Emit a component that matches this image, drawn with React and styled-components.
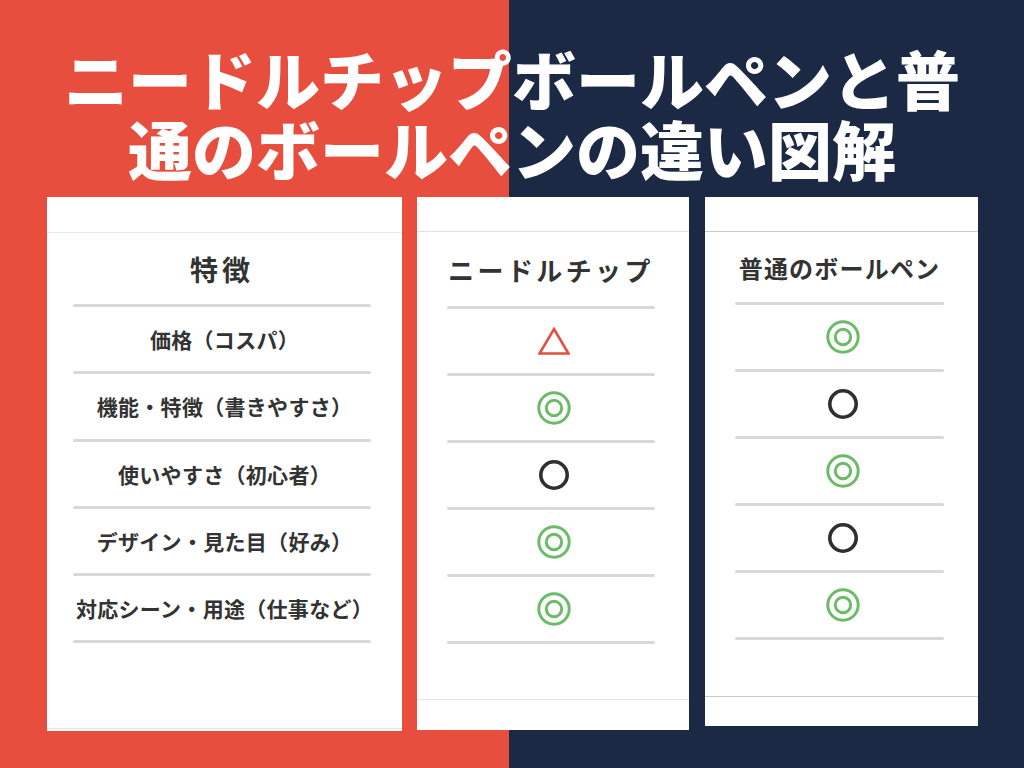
import React from "react";
import styled, { createGlobalStyle } from "styled-components";

const GlobalStyle = createGlobalStyle`
  html, body { margin: 0; padding: 0; }
  body { font-family: "Noto Sans CJK JP", "Noto Sans", sans-serif; }
`;

const Page = styled.div`
  width: 1024px;
  height: 768px;
  overflow: hidden;
  background: linear-gradient(90deg, #e74e3d 0, #e74e3d 509px, #1c2945 509px);
  display: flex;
  flex-direction: column;
`;

const Title = styled.h1`
  margin: 0;
  padding-top: 42px;
  text-align: center;
  color: #ffffff;
  font-size: 64px;
  font-weight: 900;
  line-height: 70px;
  letter-spacing: 0;
`;

const TitleLine = styled.span`
  display: block;
  white-space: nowrap;
`;

const Cards = styled.div`
  display: flex;
  align-items: flex-start;
  gap: 15px;
  padding: 15px 0 0 47px;
`;

const Card = styled.section`
  width: ${(p) => p.$w}px;
  height: ${(p) => p.$h}px;
  margin-left: ${(p) => p.$ml || 0}px;
  background: #ffffff;
  display: flex;
  flex-direction: column;
  box-sizing: border-box;
`;

const Band = styled.div`
  flex-shrink: 0;
  box-sizing: border-box;
  height: ${(p) => p.$h}px;
  ${(p) => (p.$bottom ? "border-top" : "border-bottom")}: 1px solid ${(p) => p.$line};
`;

const Body = styled.div`
  flex: 1;
  display: flex;
  flex-direction: column;
  padding: 0 ${(p) => p.$pr}px 0 ${(p) => p.$pl}px;
`;

const Heading = styled.h2`
  margin: 0;
  height: ${(p) => p.$h}px;
  display: flex;
  align-items: center;
  justify-content: center;
  font-size: ${(p) => p.$fs}px;
  letter-spacing: ${(p) => p.$ls}px;
  font-weight: 700;
  color: #333333;
  white-space: nowrap;
`;

const Rule = styled.div`
  height: 3px;
  background: #d9d9d9;
  border-radius: 2px;
  flex-shrink: 0;
`;

const Cell = styled.div`
  height: ${(p) => p.$h}px;
  display: flex;
  align-items: center;
  justify-content: center;
  padding-left: ${(p) => p.$shift || 0}px;
  font-size: 21px;
  letter-spacing: 0.3px;
  font-weight: 700;
  color: #333333;
  white-space: nowrap;
`;

const Spacer = styled.div`
  flex: 1;
`;

const DoubleCircle = () => (
  <svg width="34" height="34" viewBox="0 0 34 34">
    <circle cx="17" cy="17" r="15.2" fill="none" stroke="#6cbb69" strokeWidth="3" />
    <circle cx="17" cy="17" r="7.7" fill="none" stroke="#6cbb69" strokeWidth="3" />
  </svg>
);

const Circle = () => (
  <svg width="32" height="32" viewBox="0 0 32 32">
    <circle cx="16" cy="16" r="13.2" fill="none" stroke="#2f2f2f" strokeWidth="3.6" />
  </svg>
);

const Triangle = () => (
  <svg width="32" height="28" viewBox="0 0 32 28">
    <polygon points="16,2 30.5,26.5 1.5,26.5" fill="none" stroke="#e0533f" strokeWidth="2.6" strokeLinejoin="miter" />
  </svg>
);

const SYMBOL = { dbl: DoubleCircle, ok: Circle, tri: Triangle };

const features = [
  "価格（コスパ）",
  "機能・特徴（書きやすさ）",
  "使いやすさ（初心者）",
  "デザイン・見た目（好み）",
  "対応シーン・用途（仕事など）",
];

const columns = [
  {
    key: "feature",
    w: 355, h: 534, top: 36, bottom: 3, topLine: "#eee6e6", bottomLine: "#eee6e6",
    pl: 26, pr: 31, headH: 71, fs: 28, ls: 4, cellH: 64.3, shift: 5,
    title: "特徴", items: features, text: true,
  },
  {
    key: "needle",
    w: 272, h: 533, top: 35, bottom: 31, topLine: "#e2e0e0", bottomLine: "#ece4e4",
    pl: 30, pr: 34, headH: 74, fs: 26, ls: 3.4, cellH: 64, shift: 5,
    title: "ニードルチップ", items: ["tri", "dbl", "ok", "dbl", "dbl"],
  },
  {
    key: "normal",
    w: 273, h: 529, ml: 1, top: 35, bottom: 30, topLine: "#c9c9cc", bottomLine: "#c9c9cc",
    pl: 30, pr: 34, headH: 70, fs: 24, ls: 1.2, cellH: 64, shift: 6,
    title: "普通のボールペン", items: ["dbl", "ok", "dbl", "ok", "dbl"],
  },
];

export default function App() {
  return (
    <>
      <GlobalStyle />
      <Page>
        <Title>
          <TitleLine>ニードルチップボールペンと普</TitleLine>
          <TitleLine>通のボールペンの違い図解</TitleLine>
        </Title>
        <Cards>
          {columns.map((c) => (
            <Card key={c.key} $w={c.w} $h={c.h} $ml={c.ml}>
              <Band $h={c.top} $line={c.topLine} />
              <Body $pl={c.pl} $pr={c.pr}>
                <Heading $h={c.headH} $fs={c.fs} $ls={c.ls}>{c.title}</Heading>
                <Rule />
                {c.items.map((it, i) => {
                  const Sym = SYMBOL[it];
                  return (
                    <React.Fragment key={i}>
                      <Cell $h={c.cellH} $shift={c.shift}>
                        {c.text ? it : <Sym />}
                      </Cell>
                      <Rule />
                    </React.Fragment>
                  );
                })}
                <Spacer />
              </Body>
              <Band $bottom $h={c.bottom} $line={c.bottomLine} />
            </Card>
          ))}
        </Cards>
      </Page>
    </>
  );
}
